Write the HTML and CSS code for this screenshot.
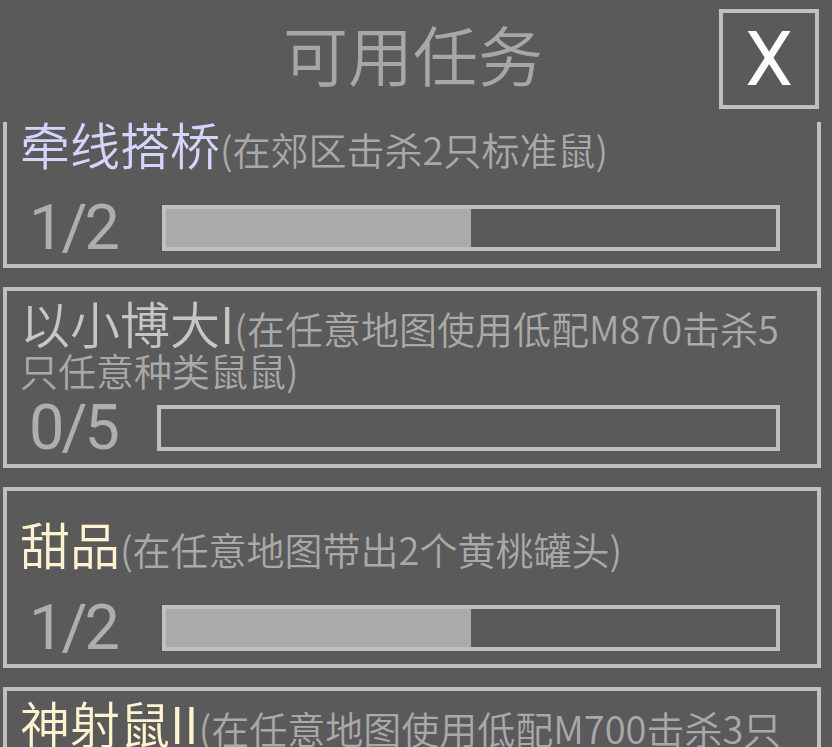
FILE: index.html
```html
<!DOCTYPE html>
<html lang="zh-CN">
<head>
<meta charset="utf-8">
<title>可用任务</title>
<link rel="stylesheet" href="styles.css">
</head>
<body>
<div class="screen">
  <header class="header">
    <div class="spacer"></div>
    <h1 class="title">可用任务</h1>
    <div class="close-wrap"><button class="close">X</button></div>
  </header>
  <div class="list">
    <div class="list-inner">
      <div class="card">
        <div class="desc"><p class="desc-text"><span class="name name--lavender">牵线搭桥</span><span class="sub">(在郊区击杀2只标准鼠)</span></p></div>
        <div class="progress">
          <span class="num">1/2</span>
          <div class="bar"><div class="fill" style="width:50%"></div></div>
        </div>
      </div>
      <div class="card">
        <div class="desc"><p class="desc-text"><span class="name name--gray">以小博大I</span><span class="sub">(在任意地图使用低配M870击杀5只任意种类鼠鼠)</span></p></div>
        <div class="progress">
          <span class="num num--tight">0/5</span>
          <div class="bar"><div class="fill" style="width:0%"></div></div>
        </div>
      </div>
      <div class="card">
        <div class="desc"><p class="desc-text"><span class="name name--cream">甜品</span><span class="sub">(在任意地图带出2个黄桃罐头)</span></p></div>
        <div class="progress">
          <span class="num">1/2</span>
          <div class="bar"><div class="fill" style="width:50%"></div></div>
        </div>
      </div>
      <div class="card">
        <div class="desc"><p class="desc-text"><span class="name name--cream">神射鼠II</span><span class="sub">(在任意地图使用低配M700击杀3只任意种类鼠鼠)</span></p></div>
        <div class="progress">
          <span class="num">0/3</span>
          <div class="bar"><div class="fill" style="width:0%"></div></div>
        </div>
      </div>
    </div>
  </div>
</div>
</body>
</html>
```

FILE: styles.css
```css
html, body {
  margin: 0;
  padding: 0;
  background: #5a5a5a;
}
body {
  width: 832px;
  height: 747px;
  overflow: hidden;
  font-family: "Noto Sans CJK SC", "Noto Sans", sans-serif;
}
.screen {
  display: flex;
  flex-direction: column;
  height: 747px;
}
.header {
  height: 122px;
  flex: none;
  display: grid;
  grid-template-columns: 1fr auto 1fr;
  align-items: start;
}
.title {
  margin: 0;
  padding-top: 10px;
  font-size: 65px;
  font-weight: 350;
  line-height: 86px;
  color: #a9a6a6;
  transform: translateX(-3px);
}
.close-wrap {
  display: flex;
  justify-content: flex-end;
  padding-right: 13px;
  padding-top: 9px;
}
.close {
  width: 100px;
  height: 100px;
  box-sizing: border-box;
  border: 4px solid #c0c0c0;
  background: transparent;
  color: #ffffff;
  font-family: Roboto, "Liberation Sans", sans-serif;
  font-weight: 400;
  font-size: 76px;
  line-height: 1;
  padding: 0;
  display: flex;
  align-items: center;
  justify-content: center;
}
.list {
  flex: 1;
  overflow: hidden;
}
.list-inner {
  margin-top: -35px;
  padding-left: 3px;
  width: 818px;
  display: flex;
  flex-direction: column;
  gap: 19px;
}
.card {
  height: 181px;
  box-sizing: border-box;
  border: 4px solid #c0c0c0;
  display: flex;
  flex-direction: column;
  flex: none;
}
.desc {
  height: 114px;
  display: flex;
  align-items: center;
  padding: 0 15px 0 13px;
  flex: none;
}
.desc-text {
  margin: 0;
  font-size: 38px;
  line-height: 42px;
}
.name {
  font-size: 50px;
  line-height: 32px;
  font-weight: 350;
}
.name--lavender { color: #d4d4fc; }
.name--gray { color: #c6c6c6; }
.name--cream { color: #fff4cf; }
.sub {
  font-size: 38px;
  font-weight: 350;
  color: #a9a9a9;
}
.progress {
  height: 46px;
  display: flex;
  align-items: center;
  padding-left: 22px;
  padding-right: 37px;
}
.num {
  width: 133px;
  flex: none;
  font-family: Roboto, "Liberation Sans", sans-serif;
  font-size: 63px;
  line-height: 46px;
  letter-spacing: -3px;
  color: #b1adad;
}
.num--tight {
  width: 128px;
}
.bar {
  flex: 1;
  height: 46px;
  box-sizing: border-box;
  border: 4px solid #c0c0c0;
}
.fill {
  height: 100%;
  background: #aaaaaa;
}
```
